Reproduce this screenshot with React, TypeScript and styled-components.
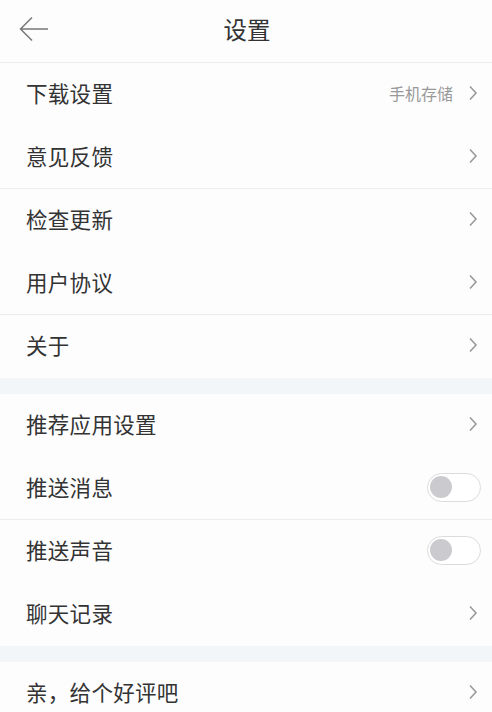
import React from 'react';
import styled, { createGlobalStyle } from 'styled-components';

const GlobalStyle = createGlobalStyle`
  html, body {
    margin: 0;
    padding: 0;
    background: #fdfdfe;
    font-family: "Noto Sans CJK SC", "Noto Sans", sans-serif;
  }
`

const Page = styled.div`
  width: 492px;
  background: #fdfdfe;
`

const Header = styled.div`
  position: relative;
  height: 62px;
  display: flex;
  align-items: center;
  justify-content: center;
  border-bottom: 1px solid #ececee;
`

const BackButton = styled.div`
  position: absolute;
  left: 19px;
  top: 16px;
  width: 30px;
  height: 26px;
  display: flex;
  align-items: center;
`

const Title = styled.div`
  font-size: 23.5px;
  color: #333;
  margin: 0 0 4px 2px;
`

const Row = styled.div<{ $line?: boolean }>`
  height: 62px;
  display: flex;
  align-items: center;
  padding: 0 14px 0 26px;
  border-bottom: 1px solid ${p => (p.$line ? '#ececee' : 'transparent')};
`

const Label = styled.div`
  flex: 1;
  font-size: 21.5px;
  color: #333;
  letter-spacing: 0.3px;
  margin-bottom: 4px;
`

const Extra = styled.div`
  font-size: 16px;
  color: #999;
  margin: 0 15px 3px 0;
`

const Gap = styled.div`
  height: 16px;
  background: #f2f6f9;
`

const Switch = styled.div`
  width: 50px;
  height: 27px;
  border: 1.5px solid #dcdcdc;
  border-radius: 15px;
  display: flex;
  align-items: center;
  padding-left: 2.5px;
  margin: 0 -3px 2px 0;
  background: #fff;
`

const Knob = styled.div`
  width: 22px;
  height: 22px;
  border-radius: 50%;
  background: #cbcbcf;
`

const Chevron = () => (
  <svg width="10" height="16" viewBox="0 0 10 16" style={{ marginBottom: 2 }}>
    <path d="M2 1.5 L8 8 L2 14.5" fill="none" stroke="#999" strokeWidth="1.6" />
  </svg>
)

type Item = { label: string; extra?: string; toggle?: boolean; line?: boolean }

const group1: Item[] = [
  { label: '下载设置', extra: '手机存储' },
  { label: '意见反馈', line: true },
  { label: '检查更新' },
  { label: '用户协议', line: true },
  { label: '关于' },
]

const group2: Item[] = [
  { label: '推荐应用设置' },
  { label: '推送消息', toggle: true, line: true },
  { label: '推送声音', toggle: true },
  { label: '聊天记录' },
]

const group3: Item[] = [{ label: '亲，给个好评吧' }]

function SettingRow({ item }: { item: Item }) {
  return (
    <Row $line={item.line}>
      <Label>{item.label}</Label>
      {item.extra && <Extra>{item.extra}</Extra>}
      {item.toggle ? (
        <Switch>
          <Knob />
        </Switch>
      ) : (
        <Chevron />
      )}
    </Row>
  )
}

export default function App() {
  return (
    <Page>
      <GlobalStyle />
      <Header>
        <BackButton>
          <svg width="30" height="26" viewBox="0 0 30 26">
            <path d="M29 13 H2 M13 1.5 L1.5 13 L13 24.5" fill="none" stroke="#777" strokeWidth="1.5" />
          </svg>
        </BackButton>
        <Title>设置</Title>
      </Header>
      {group1.map(i => <SettingRow key={i.label} item={i} />)}
      <Gap />
      {group2.map(i => <SettingRow key={i.label} item={i} />)}
      <Gap />
      {group3.map(i => <SettingRow key={i.label} item={i} />)}
    </Page>
  );
}
